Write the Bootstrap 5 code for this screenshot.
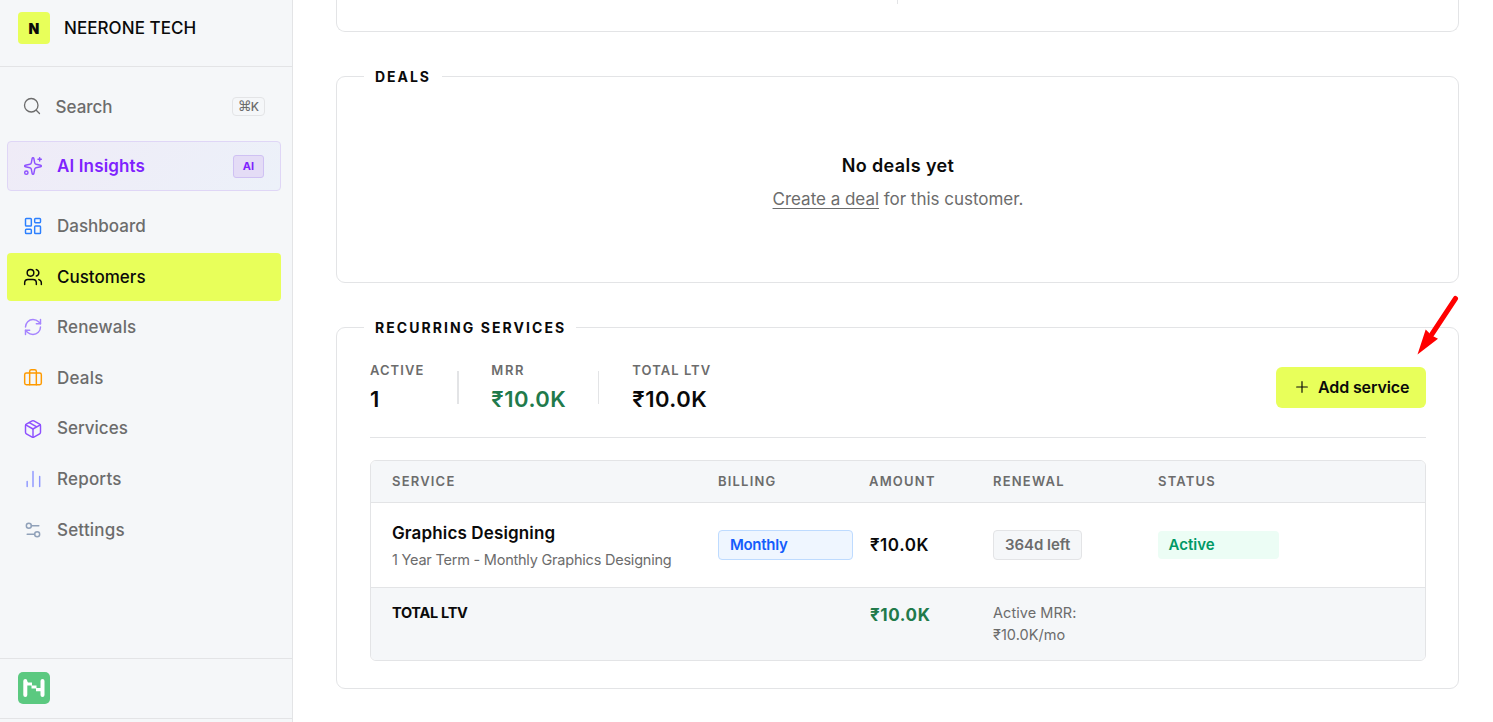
<!DOCTYPE html>
<html lang="en">
<head>
<meta charset="utf-8">
<meta name="viewport" content="width=device-width, initial-scale=1">
<title>Neerone Tech – Customer</title>
<link href="https://cdn.jsdelivr.net/npm/bootstrap@5.3.0/dist/css/bootstrap.min.css" rel="stylesheet">
<style>
:root{--line:#e3e4e6;--panel:#f5f7f9;--lime:#e8ff5a;--ink:#0a0a0a;--muted-ink:#6c6c6c}
body{font-family:Inter,"Noto Sans",sans-serif;color:var(--ink);height:722px;overflow:hidden;background:#fff;line-height:1.5}
svg{display:block;flex:none}
.ico{width:20px;height:20px;fill:none;stroke:currentColor;stroke-width:1.75;stroke-linecap:round;stroke-linejoin:round}
.sidebar{width:293px;background:var(--panel);border-right:1px solid var(--line)}
.side-head{height:67px;padding:12px 18px 22px;border-bottom:1px solid var(--line);gap:14px}
.org-mark{width:32px;height:32px;border-radius:4px;background:var(--lime);font-weight:900;font-size:14px}
.org-name{font-size:17px;font-weight:500;letter-spacing:.06px;padding-top:1px}
.side-nav{padding:15px 11px 0 7px}
.side-link{height:48px;margin-bottom:2.65px;padding:0 16px;gap:14px;border-radius:4px;font-size:17px;font-weight:500;color:var(--muted-ink);text-decoration:none}
.side-link span{padding-top:1px}
.side-link.current{background:var(--lime);color:var(--ink)}
.side-link.current span{padding-top:2px}
.side-link.search{gap:13.500px;margin-bottom:11px}
.side-link.search span{padding-top:3px}
.side-link.search .ico{width:18px;height:18px;margin:0 1px 0 0}
.side-link.ai{height:50px;margin-bottom:11px;padding:0 16px 0 15px;color:#7f22fe;border:1px solid #dfd6f6;background:linear-gradient(135deg,#efebf7,#ecf1f9);font-weight:600;letter-spacing:.14px}
.side-link.ai .ico{color:#8e51ff}
.wide{letter-spacing:.2px}
.key-hint{font-size:12px;line-height:17px;padding:0 5px;border:1px solid var(--line);border-radius:4px}
.key-hint b{font:14px/17px "DejaVu Sans",sans-serif;margin-right:-1px}
.ai-tag{font-size:11px;font-weight:700;line-height:21px;width:31px;text-align:center;border:1px solid #cfc1f3;border-radius:3px;background:#e4dcf6}
.side-foot{height:61px;border:solid var(--line);border-width:1px 0;padding:13px 18px;margin-bottom:3px}
.main{padding:0 34px 0 43px}
.panel{border:1px solid var(--line);border-radius:9px}
.panel-top{height:32px;border-top:0;border-radius:0 0 9px 9px;margin-bottom:44px}
.panel-top i{width:1px;height:4px;background:var(--line)}
.panel-deals{height:207px;margin-bottom:44px}
.panel-rec{height:362px;padding:0 32px 0 33px}
.panel-title{font-size:14px;font-weight:700;line-height:20px;letter-spacing:1.95px;margin:-10px 0 0 27px;padding:0 11px;background:#fff}
.panel-rec .panel-title{margin-left:-6px;letter-spacing:2.06px;padding-right:10px}
.empty-title{font-size:18px;font-weight:600;line-height:27px;letter-spacing:.4px;margin-top:-5px;padding-left:1px}
.empty-text{font-size:17px;line-height:26px;color:var(--muted-ink);margin-top:-1px;padding-left:1px;letter-spacing:-.02px}
.empty-text a{color:inherit;text-underline-offset:3px;text-decoration-thickness:1px}
.stats{height:100px;border-bottom:1px solid var(--line);margin-bottom:22px}
.stat-label,.grid-head{font-size:13px;font-weight:600;letter-spacing:1.2px;color:var(--muted-ink);line-height:20px}
.stat-label{margin-top:-1px;letter-spacing:1.05px}
.stat-label.short{letter-spacing:1.6px}
.stat-value{font-size:22px;font-weight:600;line-height:30px;margin-top:4px;margin-bottom:1px;letter-spacing:.5px}
.stat-sep{width:1px;height:33px;background:var(--line);margin:0 33px 0 32px}
.stat-sep.thick{width:2px;margin:0 32px 0 33px}
.money{color:#217a4b}
.add-btn{width:150px;height:41px;padding:0 0 1px 17px;gap:8px;border-radius:6px;background:var(--lime);font-size:16px;font-weight:600;letter-spacing:-.12px;color:var(--ink)}
.svc-table{border:1px solid var(--line);border-radius:6px;overflow:hidden}
.svc-row{display:grid;grid-template-columns:310fr 135fr 108fr 149fr 121fr 109fr;column-gap:16px;padding:0 21px}
.grid-head{height:42px;align-items:center;background:var(--panel);border-bottom:1px solid var(--line);padding-bottom:2px}
.svc-body{height:84px;align-items:center}
.svc-total{height:73px;background:var(--panel);border-top:1px solid var(--line);padding-top:14px;align-items:start}
.svc-name{font-size:17px;font-weight:600;line-height:26px;letter-spacing:.14px}
.svc-note{font-size:14.5px;line-height:22px;color:var(--muted-ink);letter-spacing:-.22px;margin-top:3px;white-space:nowrap}
.svc-total .svc-note{letter-spacing:.05px;margin-top:0}
.svc-total .total-label{font-weight:700;color:var(--ink);letter-spacing:-.28px}
.pill{font-size:15px;font-weight:600;line-height:28px;height:30px;padding:0 11px;border:1px solid;border-radius:4px;white-space:nowrap}
.pill-blue{color:#155dfc;background:#eff6ff;border-color:#bedbff;letter-spacing:-.3px}
.pill-grey{color:var(--muted-ink);background:var(--panel);border-color:var(--line);justify-self:start;letter-spacing:-.05px}
.pill-green{color:#009966;background:#ecfdf5;border:0;height:28px;padding:0 10.5px}
.amount{font-size:17px;font-weight:600;letter-spacing:.57px;padding:1px 0 0 1px}
.amount.money{font-weight:700;letter-spacing:.6px}
.callout-arrow{position:absolute;left:1412px;top:290px;z-index:5}
</style>
<script src="https://cdn.jsdelivr.net/npm/bootstrap@5.3.0/dist/js/bootstrap.bundle.min.js"></script>
</head>
<body class="d-flex position-relative">
<aside class="sidebar d-flex flex-column flex-shrink-0">
  <div class="side-head d-flex align-items-center">
    <div class="org-mark d-flex align-items-center justify-content-center">N</div>
    <div class="org-name">NEERONE TECH</div>
  </div>
  <nav class="side-nav flex-grow-1">
    <a href="#" class="side-link search d-flex align-items-center">
      <svg class="ico" viewBox="0 0 24 24"><circle cx="11" cy="11" r="9"/><path d="m22 22-4.3-4.3"/></svg>
      <span>Search</span><small class="key-hint ms-auto"><b>⌘</b>K</small>
    </a>
    <a href="#" class="side-link ai d-flex align-items-center">
      <svg class="ico" viewBox="0 0 24 24"><path d="M11.017 2.814a1 1 0 0 1 1.966 0l1.051 5.558a2 2 0 0 0 1.594 1.594l5.558 1.051a1 1 0 0 1 0 1.966l-5.558 1.051a2 2 0 0 0-1.594 1.594l-1.051 5.558a1 1 0 0 1-1.966 0l-1.051-5.558a2 2 0 0 0-1.594-1.594l-5.558-1.051a1 1 0 0 1 0-1.966l5.558-1.051a2 2 0 0 0 1.594-1.594z"/><path d="M20 2v4M22 4h-4"/><circle cx="4" cy="20" r="2"/></svg>
      <span>AI Insights</span><small class="ai-tag ms-auto">AI</small>
    </a>
    <a href="#" class="side-link d-flex align-items-center">
      <svg class="ico" style="color:#2b7fff" viewBox="0 0 24 24"><rect width="7" height="9" x="3" y="3" rx="1"/><rect width="7" height="5" x="14" y="3" rx="1"/><rect width="7" height="9" x="14" y="12" rx="1"/><rect width="7" height="5" x="3" y="16" rx="1"/></svg>
      <span>Dashboard</span>
    </a>
    <a href="#" class="side-link current d-flex align-items-center">
      <svg class="ico" viewBox="0 0 24 24"><path d="M16 21v-2a4 4 0 0 0-4-4H6a4 4 0 0 0-4 4v2"/><circle cx="9" cy="7" r="4"/><path d="M22 21v-2a4 4 0 0 0-3-3.87M16 3.13a4 4 0 0 1 0 7.75"/></svg>
      <span>Customers</span>
    </a>
    <a href="#" class="side-link wide d-flex align-items-center">
      <svg class="ico" style="color:#a684ff" viewBox="0 0 24 24"><path d="M3 12a9 9 0 0 1 9-9 9.75 9.75 0 0 1 6.74 2.74L21 8"/><path d="M21 3v5h-5M21 12a9 9 0 0 1-9 9 9.75 9.75 0 0 1-6.74-2.74L3 16"/><path d="M8 16H3v5"/></svg>
      <span>Renewals</span>
    </a>
    <a href="#" class="side-link wide d-flex align-items-center">
      <svg class="ico" style="color:#fe9a00" viewBox="0 0 24 24"><path d="M16 20V4a2 2 0 0 0-2-2h-4a2 2 0 0 0-2 2v16"/><rect width="20" height="14" x="2" y="6" rx="2"/></svg>
      <span>Deals</span>
    </a>
    <a href="#" class="side-link d-flex align-items-center">
      <svg class="ico" style="color:#8e51ff" viewBox="0 0 24 24"><path d="M11 21.73a2 2 0 0 0 2 0l7-4A2 2 0 0 0 21 16V8a2 2 0 0 0-1-1.73l-7-4a2 2 0 0 0-2 0l-7 4A2 2 0 0 0 3 8v8a2 2 0 0 0 1 1.73z"/><path d="M12 22V12"/><path d="m3.3 7 8.7 5 8.7-5M7.5 4.27l9 5.15"/></svg>
      <span>Services</span>
    </a>
    <a href="#" class="side-link wide d-flex align-items-center">
      <svg class="ico" style="color:#8f98ff" viewBox="0 0 24 24"><path d="M20 21V9M12 21V3M5 21v-6"/></svg>
      <span>Reports</span>
    </a>
    <a href="#" class="side-link wide d-flex align-items-center">
      <svg class="ico" style="color:#90a1b9" viewBox="0 0 24 24"><path d="M14 17H5M19 7h-9"/><circle cx="17" cy="17" r="3"/><circle cx="7" cy="7" r="3"/></svg>
      <span>Settings</span>
    </a>
  </nav>
  <div class="side-foot">
    <svg width="32" height="32" viewBox="0 0 32 32"><rect width="32" height="32" rx="5" fill="#5bc980"/><path d="M7.3 9V23M24.500 9V23" stroke="#fff" stroke-width="4" stroke-linecap="round"/><path d="M8 10.500 9 12h5M13.500 15h5M18 17.700h6" fill="none" stroke="#fff" stroke-width="3.200"/></svg>
  </div>
</aside>
<main class="main flex-grow-1">
  <section class="panel panel-top d-flex justify-content-center"><i></i></section>
  <section class="panel panel-deals d-flex flex-column">
    <h2 class="panel-title align-self-start">DEALS</h2>
    <div class="flex-grow-1 d-flex flex-column align-items-center justify-content-center gap-2">
      <div class="empty-title">No deals yet</div>
      <div class="empty-text"><a href="#">Create a deal</a> for this customer.</div>
    </div>
  </section>
  <section class="panel panel-rec d-flex flex-column">
    <h2 class="panel-title align-self-start">RECURRING SERVICES</h2>
    <div class="stats d-flex align-items-center">
      <div class="d-flex align-items-center">
        <div><div class="stat-label">ACTIVE</div><div class="stat-value">1</div></div>
        <div class="stat-sep thick"></div>
        <div><div class="stat-label short">MRR</div><div class="stat-value money">₹10.0K</div></div>
        <div class="stat-sep"></div>
        <div><div class="stat-label">TOTAL LTV</div><div class="stat-value">₹10.0K</div></div>
      </div>
      <button class="btn add-btn d-flex align-items-center ms-auto"><svg class="ico" style="width:16px;height:16px" viewBox="0 0 24 24"><path d="M4 12h16M12 4v16"/></svg>Add service</button>
    </div>
    <div class="svc-table">
      <div class="svc-row grid-head"><div>SERVICE</div><div>BILLING</div><div>AMOUNT</div><div>RENEWAL</div><div>STATUS</div></div>
      <div class="svc-row svc-body">
        <div><div class="svc-name">Graphics Designing</div><div class="svc-note">1 Year Term - Monthly Graphics Designing</div></div>
        <div class="pill pill-blue">Monthly</div><div class="amount">₹10.0K</div>
        <div class="pill pill-grey">364d left</div><div class="pill pill-green">Active</div>
      </div>
      <div class="svc-row svc-total">
        <div class="svc-note total-label">TOTAL LTV</div><div></div>
        <div class="amount money">₹10.0K</div>
        <div class="svc-note">Active MRR:<br>₹10.0K/mo</div>
      </div>
    </div>
  </section>
</main>
<svg class="callout-arrow" width="50" height="70" viewBox="0 0 50 70"><path d="M43.500 8.500 20 44" stroke="#f00" stroke-width="5" stroke-linecap="round"/><path d="M5.500 64.500 13.700 39.500l4 4 4 3 4.300 2.300z" fill="#f00"/></svg>
</body>
</html>
